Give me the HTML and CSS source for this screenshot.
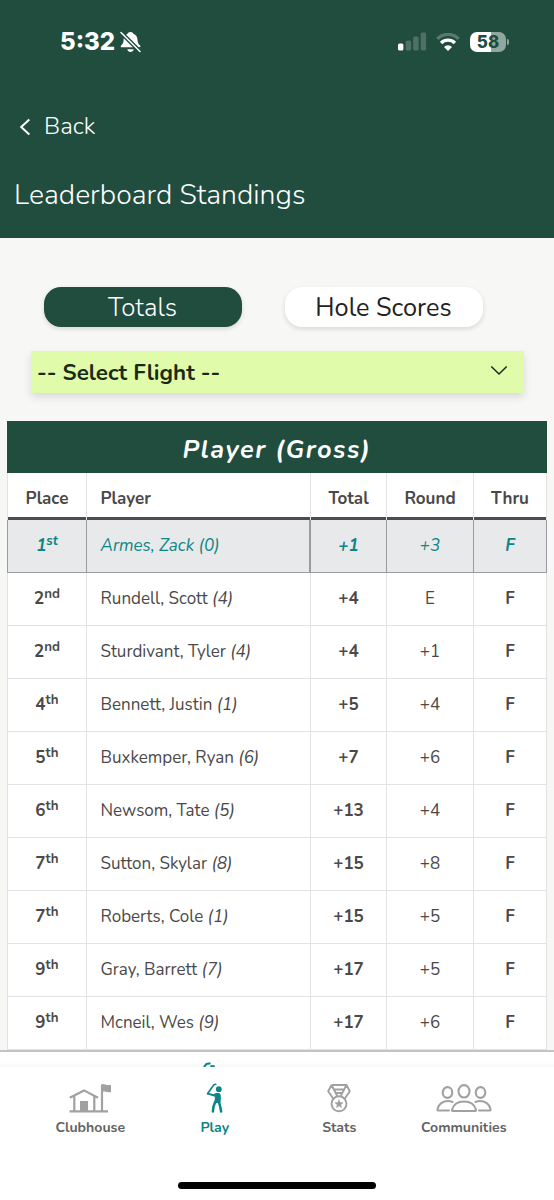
FILE: index.html
```html
<!DOCTYPE html>
<html lang="en">
<head>
    <meta charset="UTF-8">
    <meta name="viewport" content="width=device-width, initial-scale=1.0">
    <title>Leaderboard Standings</title>
    <link rel="stylesheet" href="styles.css">
</head>
<body>
    <header class="header">
        <div class="status-bar">
            <div class="status-left">
                <span class="clock">5:32</span>
                <svg class="bell" width="21" height="22" viewBox="0 0 21 22">
                    <path fill="#fff" d="M10.500 1c1.600 0 2.600.7 2.900 1.800 2.600 1 4 3 4.100 5.900.1 3 .9 4.300 2.600 5.800.6.6.4 1.700-.7 1.700H2c-1.300 0-1.700-1-.9-1.800C3 12.600 3.500 11.500 3.600 8.700c.1-2.900 1.500-4.900 4-5.900C7.900 1.700 8.900 1 10.500 1zM7.300 18.200h6.400c-.4 1.800-1.600 2.800-3.200 2.800s-2.800-1-3.200-2.800z"/>
                    <path stroke="#214d3f" stroke-width="4.200" d="M0 .5l21 21"/>
                    <path stroke="#fff" stroke-width="1.500" stroke-linecap="round" d="M1 1.500l19 19"/>
                </svg>
            </div>
            <div class="status-right">
                <svg width="29" height="19" viewBox="0 0 29 19" fill="#fff">
                    <rect x="0" y="11.500" width="5.400" height="7" rx="1.500"/>
                    <g opacity=".2">
                        <rect x="7.700" y="8.500" width="5.400" height="10" rx="1.500"/>
                        <rect x="15.200" y="4.500" width="5.400" height="14" rx="1.500"/>
                        <rect x="22.700" y=".5" width="5.400" height="18" rx="1.500"/>
                    </g>
                </svg>
                <svg class="wifi" width="24" height="18" viewBox="0 0 24 18" fill="none" stroke="#fff">
                    <path stroke-width="3.300" opacity=".25" d="M1.300 5.800a15.200 15.200 0 0 1 21.400 0"/>
                    <path stroke-width="3.300" d="M5.100 10a9.800 9.800 0 0 1 13.800 0"/>
                    <path fill="#fff" stroke="none" d="M8 13.900a5.700 5.700 0 0 1 8 0L12 17.900z"/>
                </svg>
                <div class="battery"><span>58</span></div>
            </div>
        </div>
        <div class="back">
            <svg width="12" height="18" viewBox="0 0 12 18" fill="none" stroke="#fff" stroke-width="2">
                <path d="M10.300 1.500L2.200 9l8.100 7.500"/>
            </svg>
            <span>Back</span>
        </div>
        <h1>Leaderboard Standings</h1>
    </header>

    <main class="content">
        <div class="toggle">
            <button class="pill active">Totals</button>
            <button class="pill">Hole Scores</button>
        </div>
        <div class="select">
            <span>-- Select Flight --</span>
            <svg width="18" height="11" viewBox="0 0 18 11" fill="none" stroke="#1b2a18" stroke-width="1.500">
                <path d="M1.300 1.500L9 9l7.700-7.500"/>
            </svg>
        </div>

        <table class="board">
            <caption>Player (Gross)</caption>
            <thead>
                <tr><th class="place">Place</th><th class="player">Player</th><th class="total">Total</th><th class="round">Round</th><th class="thru">Thru</th></tr>
            </thead>
            <tbody>
                <tr class="leader"><td>1<sup>st</sup></td><td>Armes, Zack <i>(0)</i></td><td>+1</td><td>+3</td><td>F</td></tr>
                <tr><td>2<sup>nd</sup></td><td>Rundell, Scott <i>(4)</i></td><td>+4</td><td>E</td><td>F</td></tr>
                <tr><td>2<sup>nd</sup></td><td>Sturdivant, Tyler <i>(4)</i></td><td>+4</td><td>+1</td><td>F</td></tr>
                <tr><td>4<sup>th</sup></td><td>Bennett, Justin <i>(1)</i></td><td>+5</td><td>+4</td><td>F</td></tr>
                <tr><td>5<sup>th</sup></td><td>Buxkemper, Ryan <i>(6)</i></td><td>+7</td><td>+6</td><td>F</td></tr>
                <tr><td>6<sup>th</sup></td><td>Newsom, Tate <i>(5)</i></td><td>+13</td><td>+4</td><td>F</td></tr>
                <tr><td>7<sup>th</sup></td><td>Sutton, Skylar <i>(8)</i></td><td>+15</td><td>+8</td><td>F</td></tr>
                <tr><td>7<sup>th</sup></td><td>Roberts, Cole <i>(1)</i></td><td>+15</td><td>+5</td><td>F</td></tr>
                <tr><td>9<sup>th</sup></td><td>Gray, Barrett <i>(7)</i></td><td>+17</td><td>+5</td><td>F</td></tr>
                <tr><td>9<sup>th</sup></td><td>Mcneil, Wes <i>(9)</i></td><td>+17</td><td>+6</td><td>F</td></tr>
            </tbody>
        </table>
    </main>

    <div class="peek">
        <svg width="14" height="5" viewBox="0 0 14 5" fill="none" stroke="#0b8585">
            <path stroke-width="2" d="M1 5l2.500-3L7.500 1.200"/>
            <path stroke-width="1.800" d="M7.300 4.600q2.200-1.300 4.400 0"/>
        </svg>
    </div>

    <nav class="tabs">
        <a class="tab">
            <svg width="42" height="30" viewBox="0 0 42 30" fill="none" stroke="#a0a2a0" stroke-width="2.200">
                <path d="M.5 28.300H39M5.300 13v15M25.300 13v15M.8 14.800L15 7.400l14 7.400M33 28V1.500"/>
                <path fill="#a0a2a0" stroke="none" d="M11 18h8v10h-8zM33 1c3 0 4 1.300 9 1v7.200c-4 .5-6-.8-9-.6z"/>
            </svg>
            <span>Clubhouse</span>
        </a>
        <a class="tab current">
            <svg width="18" height="30" viewBox="0 0 18 30" fill="none" stroke="#0b8585" stroke-linecap="round" stroke-linejoin="round">
                <path stroke-width="1.600" d="M9.800 1.200L7.900 1.800 1.700 10.500"/>
                <path stroke-width="1.900" d="M1.700 10.700L8.500 12.500"/>
                <circle cx="12.800" cy="6.200" r="2.900" fill="#0b8585" stroke="none"/>
                <path fill="#0b8585" stroke="none" d="M7.300 11.300c2.500-1.300 5.900-1.800 6.900-.3 1.200 2 .5 4.700.3 8.700l-6.300.5c.3-3 1.200-5.500.4-7.500z"/>
                <path stroke-width="2.500" d="M9.200 19l-1.700 4.500-.6 5M12.900 19l1.300 4.500.9 5"/>
            </svg>
            <span>Play</span>
        </a>
        <a class="tab">
            <svg width="24" height="30" viewBox="0 0 24 30" fill="none" stroke="#a0a2a0" stroke-width="1.900" stroke-linejoin="round">
                <path d="M4.500 2h15l3.300 6.300-5.500 8M4.500 2L1.200 8.300l5.500 8M4.500 2l5.800 11M19.500 2l-5.800 11M7 6.500h10M8.700 10h6.600"/>
                <circle cx="12" cy="20.800" r="7.500"/>
                <path fill="#a0a2a0" stroke="none" d="M12 16l1.300 3.200 3.400.3-2.600 2.200.8 3.300-2.900-1.800L9.100 25l.8-3.300-2.600-2.200 3.400-.3z"/>
            </svg>
            <span>Stats</span>
        </a>
        <a class="tab">
            <svg width="56" height="30" viewBox="0 0 56 30" fill="none" stroke="#a0a2a0" stroke-width="2.100" stroke-linecap="round" stroke-linejoin="round">
                <ellipse cx="28" cy="8.300" rx="5.500" ry="6.200"/>
                <ellipse cx="11.500" cy="9.500" rx="4.800" ry="5.400"/>
                <ellipse cx="44.500" cy="9.500" rx="4.800" ry="5.400"/>
                <path d="M17 28h22q1.200 0 .9-1.500C38.500 21.500 34 18.500 28 18.500s-10.500 3-11.900 8Q15.800 28 17 28zM13 27.500H2.500q-1.300 0-1-1.500C2.500 21 7 18 12 18q2.300 0 4.500 1M43 27.500h10.500q1.300 0 1-1.500C53.500 21 49 18 44 18q-2.300 0-4.500 1"/>
            </svg>
            <span>Communities</span>
        </a>
    </nav>
    <div class="home-bar"></div>
</body>
</html>
```
FILE: styles.css
```css
* {
    margin: 0;
    padding: 0;
    box-sizing: border-box;
}

body {
    width: 554px;
    height: 1200px;
    overflow: hidden;
    display: flex;
    flex-direction: column;
    font-family: Nunito, 'Open Sans', sans-serif;
    background-color: #fff;
    color: #4b4848;
}

svg {
    display: block;
    flex: none;
}

.header {
    height: 238px;
    background-color: #214d3f;
    color: #fff;
}

.status-bar {
    height: 83px;
    padding: 0 45px 0 60px;
    display: flex;
    align-items: center;
    justify-content: space-between;
    font-family: Inter, sans-serif;
}

.status-left,
.status-right {
    display: flex;
    align-items: center;
}

.clock {
    font-size: 24px;
    font-weight: 800;
    line-height: 28px;
}

.bell {
    margin-left: 5px;
}

.wifi {
    margin: 0 10px 0 9px;
}

.battery {
    position: relative;
    width: 36px;
    height: 20px;
    border-radius: 7px;
    background: linear-gradient(90deg, #fff 58%, #91a69f 58%);
    color: #214d3f;
    font-size: 17px;
    font-weight: 800;
    line-height: 20px;
    text-align: center;
    margin-right: 3px;
}

.battery::after {
    content: '';
    position: absolute;
    right: -3px;
    top: 7px;
    width: 2px;
    height: 6px;
    border-radius: 0 2px 2px 0;
    background-color: #91a69f;
}

.back {
    height: 87px;
    padding-left: 19px;
    display: flex;
    align-items: center;
    gap: 13px;
    font-size: 24.1px;
    font-weight: 340;
}

h1 {
    padding-left: 14px;
    font-size: 28.4px;
    font-weight: 340;
    line-height: 50px;
    white-space: nowrap;
}

.content {
    height: 814px;
    padding: 49px 7px 0;
    background-color: #f7f7f6;
    border-bottom: 2px solid #c4c4c4;
}

.toggle {
    display: flex;
    gap: 43px;
    padding-left: 36.5px;
}

.pill {
    width: 198px;
    height: 40px;
    border: none;
    border-radius: 17px;
    background-color: #fff;
    box-shadow: 0 2px 5px rgba(0,0,0,0.13);
    font-family: inherit;
    font-size: 25.3px;
    line-height: 42px;
    color: #222;
}

.pill.active {
    background-color: #214d3f;
    color: #fff;
    font-size: 25.8px;
    font-weight: 340;
}

.select {
    height: 42px;
    margin: 24px 23px 28px 24px;
    padding: 0 16px 0 6px;
    display: flex;
    align-items: center;
    justify-content: space-between;
    background-color: #e0fcaa;
    box-shadow: 0 4px 8px rgba(0,0,0,0.12);
    color: #1b2a18;
    font-size: 22.4px;
    font-weight: 700;
}

.select svg {
    margin-top: -4px;
}

.board {
    width: 540px;
    table-layout: fixed;
    border-collapse: separate;
    border-spacing: 0;
    background-color: #fff;
    font-size: 17px;
}

.board caption {
    height: 52px;
    background-color: #214d3f;
    color: #fff;
    font-size: 25.4px;
    font-weight: 680;
    font-style: italic;
    line-height: 57px;
    letter-spacing: 1.5px;
}

.place { width: 80px; }
.player { width: 224px; }
.total { width: 76px; }
.round { width: 87px; }
.thru { width: 73px; }

.board th,
.board td {
    text-align: center;
    border-right: 1px solid #e3e3e5;
    white-space: nowrap;
}

.board th:first-child,
.board td:first-child {
    border-left: 1px solid #e3e3e5;
}

.board th:nth-child(2),
.board td:nth-child(2) {
    text-align: left;
    padding-left: 13.5px;
}

.board th {
    height: 47px;
    padding: 7px 0 3px;
    font-weight: 680;
}

/* one unbroken rule under the column heads */
.board thead tr {
    background: linear-gradient(#4e4c4c, #4e4c4c) bottom / 100% 3px no-repeat;
}

.board td {
    height: 53px;
    border-bottom: 1px solid #e3e3e5;
    padding-bottom: 1px;
}

.board td:nth-child(1),
.board td:nth-child(3),
.board td:nth-child(5) {
    font-weight: 680;
}

.board sup {
    font-size: 13.3px;
    line-height: 0;
    vertical-align: 6px;
}

.board .leader td {
    background-color: #e7e9ea;
    border-color: #999d9f;
    color: #0b8585;
    font-style: italic;
}

.board .leader td:nth-child(2) {
    border-right-width: 2px;
}

.peek {
    height: 15px;
    padding: 10px 0 0 203px;
    background: linear-gradient(#fff 70%, #f7f7f7);
}

.tabs {
    display: flex;
    height: 106px;
    padding: 16px 28px 0;
}

.tab {
    flex: 1;
    display: flex;
    flex-direction: column;
    align-items: center;
    gap: 5px;
    color: #626463;
    font-size: 14.1px;
    font-weight: 700;
    line-height: 20px;
}

.tab.current {
    color: #0b8585;
}

.home-bar {
    width: 198px;
    height: 7px;
    margin: 9px auto 0;
    border-radius: 4px;
    background-color: #000;
}
```
